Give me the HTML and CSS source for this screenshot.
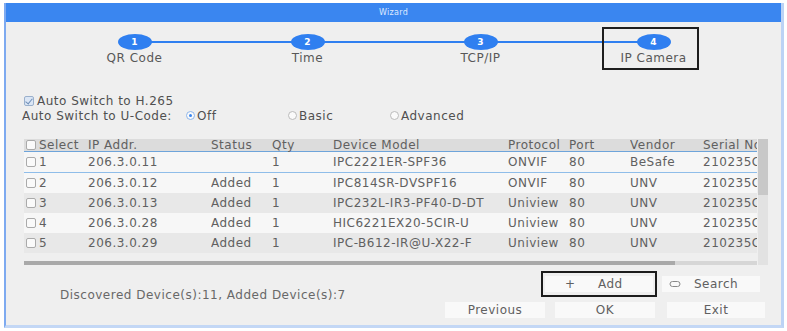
FILE: index.html
```html
<!DOCTYPE html>
<html>
<head>
<meta charset="utf-8">
<link rel="stylesheet" href="styles.css">
</head>
<body>
<div class="dialog">
  <div class="titlebar">Wizard</div>
  <div class="stepper">
    <div class="step"><div class="step-box"><span class="dot">1</span><span class="step-label">QR Code</span></div></div>
    <div class="step"><div class="step-box"><span class="dot">2</span><span class="step-label">Time</span></div></div>
    <div class="step"><div class="step-box"><span class="dot">3</span><span class="step-label">TCP/IP</span></div></div>
    <div class="step last"><div class="step-box active"><span class="dot">4</span><span class="step-label">IP Camera</span></div></div>
  </div>

  <div class="options">
    <div class="opt-line first"><span class="cb checked"></span>Auto Switch to H.265</div>
    <div class="opt-line second">
      <span class="opt-label">Auto Switch to U-Code:</span>
      <span class="radio-group"><span class="radio on"></span>Off</span>
      <span class="radio-group"><span class="radio"></span>Basic</span>
      <span class="radio-group"><span class="radio"></span>Advanced</span>
    </div>
  </div>

  <div class="table-wrap">
    <div class="table-col">
      <div class="grid">
        <div class="row head">
          <div class="c"><span class="cb"></span>Select</div><div class="c">IP Addr.</div><div class="c">Status</div><div class="c">Qty</div><div class="c">Device Model</div><div class="c">Protocol</div><div class="c">Port</div><div class="c">Vendor</div><div class="c">Serial No.</div>
        </div>
        <div class="row r1">
          <div class="c"><span class="cb"></span>1</div><div class="c">206.3.0.11</div><div class="c"></div><div class="c">1</div><div class="c">IPC2221ER-SPF36</div><div class="c">ONVIF</div><div class="c">80</div><div class="c">BeSafe</div><div class="c">210235C1</div>
        </div>
        <div class="row light">
          <div class="c"><span class="cb"></span>2</div><div class="c">206.3.0.12</div><div class="c">Added</div><div class="c">1</div><div class="c">IPC814SR-DVSPF16</div><div class="c">ONVIF</div><div class="c">80</div><div class="c">UNV</div><div class="c">210235C2</div>
        </div>
        <div class="row dark">
          <div class="c"><span class="cb"></span>3</div><div class="c">206.3.0.13</div><div class="c">Added</div><div class="c">1</div><div class="c">IPC232L-IR3-PF40-D-DT</div><div class="c">Uniview</div><div class="c">80</div><div class="c">UNV</div><div class="c">210235C2</div>
        </div>
        <div class="row light">
          <div class="c"><span class="cb"></span>4</div><div class="c">206.3.0.28</div><div class="c">Added</div><div class="c">1</div><div class="c">HIC6221EX20-5CIR-U</div><div class="c">Uniview</div><div class="c">80</div><div class="c">UNV</div><div class="c">210235C2</div>
        </div>
        <div class="row dark">
          <div class="c"><span class="cb"></span>5</div><div class="c">206.3.0.29</div><div class="c">Added</div><div class="c">1</div><div class="c">IPC-B612-IR@U-X22-F</div><div class="c">Uniview</div><div class="c">80</div><div class="c">UNV</div><div class="c">210235C2</div>
        </div>
      </div>
      <div class="hscroll"><div class="hthumb"></div></div>
    </div>
    <div class="vscroll"><div class="vthumb"></div></div>
  </div>

  <div class="footer">
    <div class="summary">Discovered Device(s):11, Added Device(s):7</div>
    <div class="actions">
      <div class="act-row top">
        <div class="add-box"><div class="btn add"><span class="plus">+</span><span>Add</span></div></div>
        <div class="btn search"><svg width="12" height="8" viewBox="0 0 12 8"><rect x="1" y="1.5" width="10" height="5" rx="2.5" fill="none" stroke="#888" stroke-width="1"/></svg><span>Search</span></div>
      </div>
      <div class="act-row bottom">
        <div class="btn nav prev">Previous</div>
        <div class="btn nav ok">OK</div>
        <div class="btn nav exit">Exit</div>
      </div>
    </div>
  </div>
</div>
</body>
</html>
```

FILE: styles.css
```css
* { box-sizing: border-box; }
body {
  margin: 0;
  background: #ffffff;
  font-family: "DejaVu Sans", "Liberation Sans", sans-serif;
  font-size: 12px;
  letter-spacing: 0.5px;
  color: #606060;
}
.dialog {
  margin: 3px 0 0 4px;
  width: 780px;
  height: 325px;
  border-left: 2px solid #7eaaf0;
  border-right: 3px solid #bcd3f5;
  border-bottom: 3px solid #c3d7f5;
  background: #efefef;
  display: flex;
  flex-direction: column;
}
.titlebar {
  height: 19px;
  background: #3a86f0;
  color: #dfeaff;
  font-size: 8px;
  letter-spacing: 0.3px;
  line-height: 19px;
  text-align: center;
}

/* stepper */
.stepper {
  display: flex;
  margin-top: 5px;
  padding-left: 42px;
}
.step {
  width: 173px;
  display: flex;
  justify-content: center;
  position: relative;
}
.step::after {
  content: "";
  position: absolute;
  top: 14px;
  left: 50%;
  width: 100%;
  height: 2px;
  background: #2f7ff0;
}
.step.last::after { display: none; }
.step-box {
  width: 97px;
  border: 2px solid transparent;
  padding: 5px 0 3px;
  display: flex;
  flex-direction: column;
  align-items: center;
}
.step.last .step-box { margin-left: -6px; padding-left: 6px; }
.step-box.active { border-color: #1e1e1e; }
.dot {
  position: relative;
  z-index: 1;
  width: 34px;
  height: 16px;
  border-radius: 50%;
  background: #2f7ff0;
  color: #fff;
  font-size: 9px;
  letter-spacing: 0;
  font-weight: bold;
  line-height: 16px;
  text-align: center;
}
.step-label {
  margin-top: 1px;
  line-height: 14px;
  color: #585858;
}

/* options */
.options {
  margin-top: 23px;
  color: #505050;
}
.opt-line {
  height: 15px;
  display: flex;
  align-items: center;
}
.opt-line.first { padding-left: 18px; }
.opt-line.second { padding-left: 16px; }
.opt-label { width: 164px; white-space: nowrap; }
.radio-group {
  width: 102px;
  display: flex;
  align-items: center;
}
.cb {
  display: inline-block;
  width: 10px;
  height: 10px;
  border: 1px solid #aaa;
  border-radius: 2px;
  background: #fafafa;
  margin-right: 3px;
  flex: none;
}
.cb.checked {
  background: #dbe6f5;
  border-color: #9ab0cc;
  position: relative;
}
.cb.checked::after {
  content: "";
  position: absolute;
  left: 2px;
  top: 0px;
  width: 3px;
  height: 6px;
  border-right: 1.5px solid #6f8fb8;
  border-bottom: 1.5px solid #6f8fb8;
  transform: rotate(40deg);
}
.radio {
  width: 9px;
  height: 9px;
  border-radius: 50%;
  border: 1px solid #bbb;
  background: #fafafa;
  margin-right: 2px;
  flex: none;
  position: relative;
}
.radio.on { border-color: #8fb6ea; }
.radio.on::after {
  content: "";
  position: absolute;
  left: 2px;
  top: 2px;
  width: 3px;
  height: 3px;
  border-radius: 50%;
  background: #3a86f0;
}

/* table */
.table-wrap {
  display: flex;
  margin-top: 16px;
  margin-left: 18px;
}
.table-col { width: 733px; }
.grid { width: 733px; overflow: hidden; }
.row {
  display: grid;
  grid-template-columns: 64px 123px 61px 61px 175px 61px 61px 73px 54px;
  height: 20px;
  align-items: center;
  color: #606060;
  white-space: nowrap;
}
.row .c { overflow: hidden; display: flex; align-items: center; }
.row .c:first-child { padding-left: 2px; }
.row.head {
  height: 13px;
  background: #dcdcdc;
  border-bottom: 1px solid #6ea4da;
}
.row.r1 {
  height: 21px;
  background: #f6f6f6;
  border-bottom: 1px solid #8fbde9;
}
.row.light { background: #f7f7f7; }
.row.dark { background: #e8e8e8; }

.hscroll {
  margin-top: 8px;
  height: 4px;
  background: #d6d6d6;
}
.hthumb {
  width: 651px;
  height: 4px;
  background: #a9a9a9;
}
.vscroll {
  width: 10px;
  margin-left: 1px;
  background: #e2e2e2;
}
.vthumb {
  height: 56px;
  background: #c8c8c8;
}

/* footer */
.footer {
  display: flex;
  margin-top: 6px;
}
.summary {
  flex: 1;
  align-self: center;
  padding-left: 54px;
  color: #686868;
  white-space: nowrap;
}
.actions {
  width: 320px;
  margin-right: 16px;
}
.act-row {
  display: flex;
  align-items: center;
}
.act-row.top {
  height: 26px;
  padding-left: 96px;
}
.act-row.bottom {
  margin-top: 5px;
  height: 16px;
}
.btn {
  background: #f9f9f9;
  color: #606060;
  height: 16px;
  display: flex;
  align-items: center;
}
.add-box {
  width: 116px;
  height: 26px;
  border: 2px solid #1c1c1c;
  padding: 3px 2px;
}
.btn.add {
  height: 16px;
  padding-left: 20px;
}
.plus { width: 33px; }
.btn.search {
  width: 98px;
  margin-left: 5px;
  padding-left: 7px;
}
.btn.search svg { margin-right: 13px; }
.btn.nav { justify-content: center; width: 100px; }
.btn.ok { margin-left: 10px; }
.btn.exit { margin-left: 12px; width: 98px; }
```
